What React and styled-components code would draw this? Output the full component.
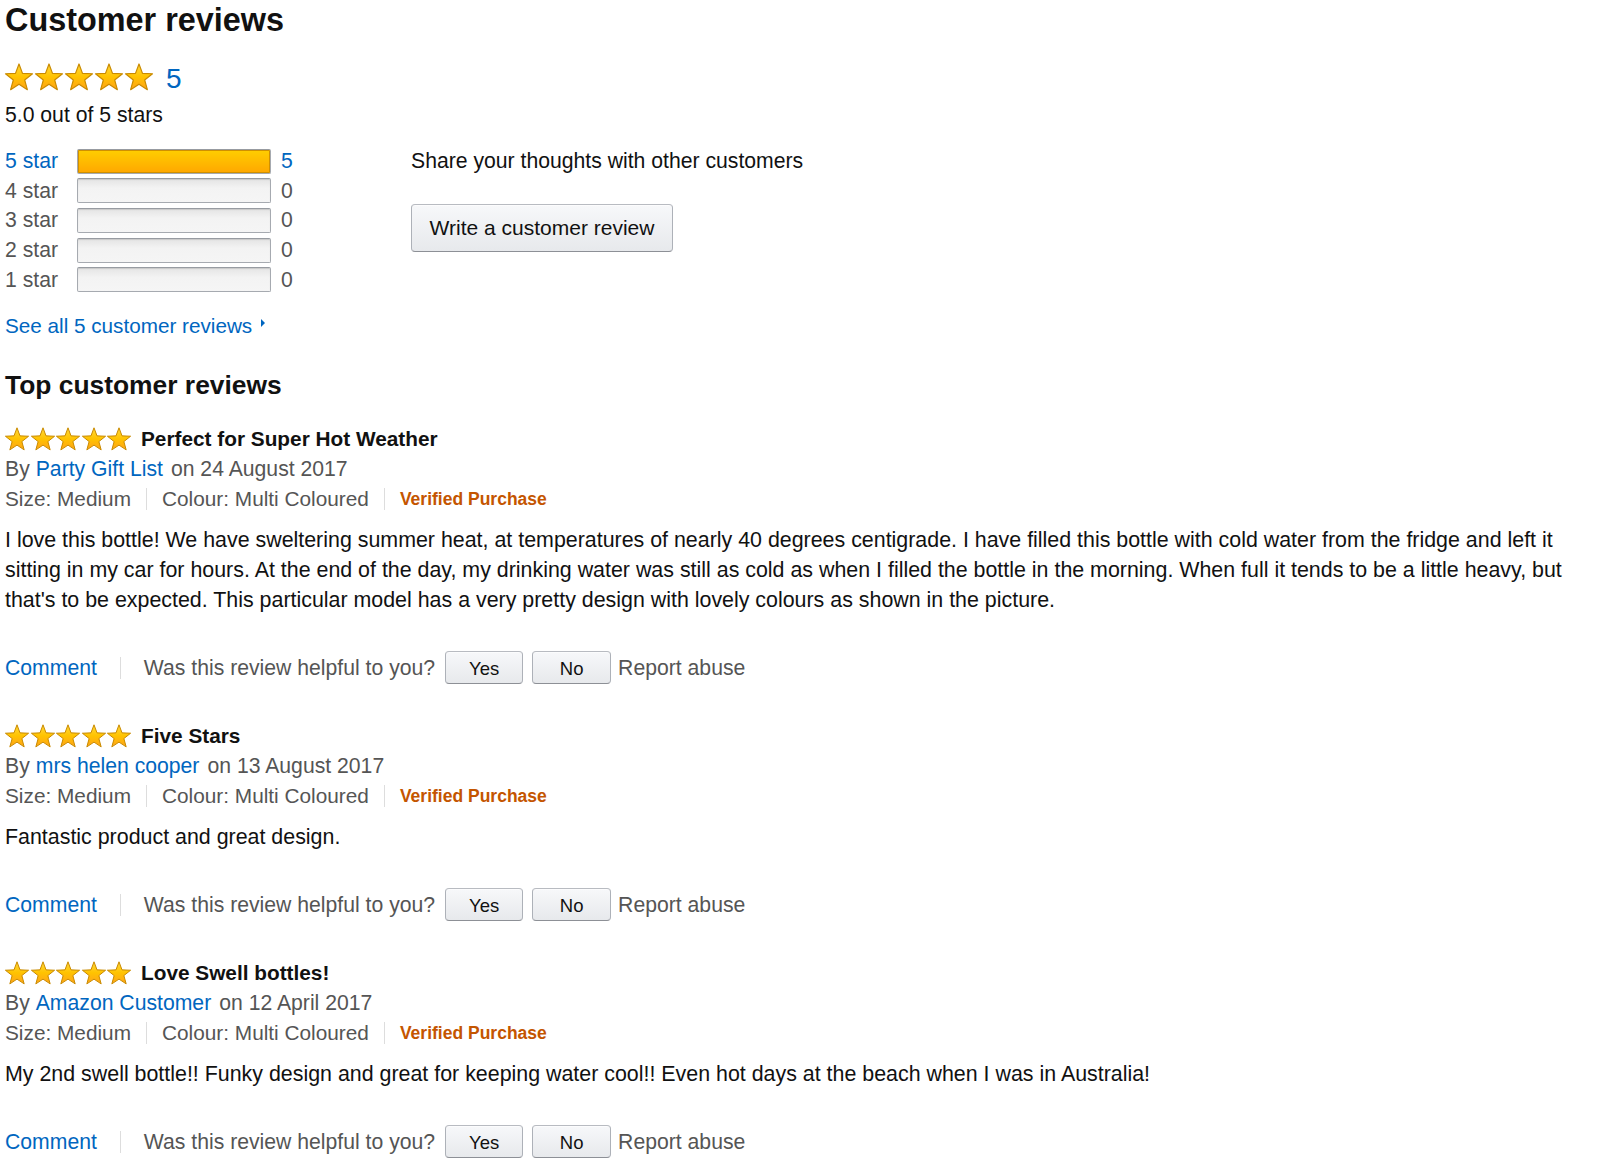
import { createGlobalStyle, styled } from "styled-components";

const GlobalStyle = createGlobalStyle`
  body {
    margin: 0;
    background: #fff;
    color: #111;
    font-family: "Liberation Sans", Arial, sans-serif;
  }
`;

const Page = styled.div`
  width: 1592px;
  padding-left: 5px;
  font-size: 21.2px;
  line-height: 30px;
`;

const Title = styled.h2`
  margin: 0;
  font-size: 32.4px;
  line-height: 41px;
  font-weight: bold;
`;

const SubTitle = styled.h3`
  margin: 27px 0 0;
  font-size: 26.4px;
  line-height: 34px;
  font-weight: bold;
`;

const Link = styled.a`
  color: #0066c0;
  text-decoration: none;
  cursor: pointer;
`;

const Summary = styled.div`
  display: flex;
  align-items: center;
  gap: 13px;
  margin-top: 21px;
  height: 30px;
`;

const BigCount = styled(Link)`
  font-size: 28px;
  line-height: 30px;
  margin-top: 4px;
`;

const OutOf = styled.div`
  margin-top: 8px;
`;

const StarsWrap = styled.span`
  display: inline-flex;
  flex-shrink: 0;
  gap: ${(p) => p.$gap}px;
  svg {
    overflow: visible;
  }
`;

const Columns = styled.div`
  display: flex;
  margin-top: 16px;
`;

const HistoColumn = styled.div`
  width: 406px;
`;

const HistoRow = styled.div`
  display: grid;
  grid-template-columns: 62px 194px auto;
  column-gap: 10px;
  align-items: center;
  height: 29.7px;
  color: ${(p) => (p.$active ? "#0066c0" : "#555")};
`;

const Meter = styled.div`
  height: 25px;
  box-sizing: border-box;
  border: 1px solid #a6aab0;
  border-top-color: #979ba1;
  border-radius: 2px;
  background: linear-gradient(to bottom, #e4e4e4, #f3f3f3 40%, #f5f5f5);
  box-shadow: inset 0 1px 1px rgba(0, 0, 0, 0.12);
  overflow: hidden;
`;

const MeterFill = styled.div`
  height: 100%;
  background: linear-gradient(to bottom, #ffce00, #ffa700);
  box-shadow: inset 0 0 0 1px #d09000;
`;

const SeeAll = styled(Link)`
  display: inline-flex;
  align-items: center;
  gap: 9px;
  margin-top: 17px;
  font-size: 20.7px;
`;

const Caret = styled.span`
  width: 0;
  height: 0;
  border-top: 4px solid transparent;
  border-bottom: 4px solid transparent;
  border-left: 4px solid #0066c0;
  margin-top: -6px;
`;

const ShareColumn = styled.div`
  display: flex;
  flex-direction: column;
  align-items: flex-start;
`;

const Button = styled.button`
  box-sizing: border-box;
  font-family: inherit;
  color: #111;
  background: linear-gradient(to bottom, #f7f8fa, #e7e9ec);
  border: 1px solid #adb1b8;
  border-top-color: #b8bbc1;
  border-bottom-color: #8d9096;
  border-radius: 4px;
  box-shadow: inset 0 1px 0 rgba(255, 255, 255, 0.6);
  cursor: pointer;
  padding: 0;
`;

const WriteButton = styled(Button)`
  margin-top: 28px;
  width: 262px;
  height: 48px;
  font-size: 21px;
`;

const Review = styled.div`
  margin-top: ${(p) => (p.$first ? "22px" : "36.5px")};
`;

const ReviewHead = styled.div`
  display: flex;
  align-items: center;
  gap: 10px;
  height: 30px;
`;

const ReviewTitle = styled.span`
  font-weight: bold;
  font-size: 20.8px;
`;

const ByLine = styled.div`
  color: #555;
  ${Link} {
    margin: 0 8px 0 6px;
  }
`;

const Meta = styled.div`
  display: flex;
  align-items: center;
  color: #555;
  font-size: 20.8px;
  height: 30px;
`;

const Sep = styled.span`
  width: 1px;
  height: 22px;
  background: #ddd;
  margin: 0 ${(p) => p.$gap || 15}px;
`;

const Verified = styled.span`
  color: #c45500;
  font-weight: bold;
  font-size: 17.5px;
`;

const Body = styled.p`
  margin: 10.5px 0 0;
  font-size: 21.4px;
  line-height: 30px;
`;

const Actions = styled.div`
  display: flex;
  align-items: center;
  margin-top: 36px;
  height: 34px;
  color: #555;
`;

const Vote = styled(Button)`
  width: ${(p) => p.$w}px;
  height: 33px;
  padding-top: 3px;
  font-size: 18.5px;
  margin-left: ${(p) => p.$ml}px;
`;

const Muted = styled.span`
  color: #555;
  margin-left: 7px;
`;

function Star({ size }) {
  return (
    <svg width={size} height={size} viewBox="0 0 24 24">
      <defs>
        <linearGradient id="starGrad" x1="0" y1="0" x2="0" y2="1">
          <stop offset="0" stopColor="#ffd83d" />
          <stop offset="0.5" stopColor="#ffc300" />
          <stop offset="1" stopColor="#ffa31a" />
        </linearGradient>
      </defs>
      <path
        d="M12 0.8L15.01 8.86L23.6 9.23L16.87 14.58L19.17 22.87L12 18.12L4.83 22.87L7.13 14.58L0.4 9.23L8.99 8.86Z"
        fill="url(#starGrad)"
        stroke="#c98a00"
        strokeWidth="1"
        strokeLinejoin="round"
      />
    </svg>
  );
}

function Stars({ size, pitch }) {
  return (
    <StarsWrap $gap={pitch - size}>
      {[0, 1, 2, 3, 4].map((i) => (
        <Star key={i} size={size} />
      ))}
    </StarsWrap>
  );
}

const histogram = [
  { label: "5 star", count: 5 },
  { label: "4 star", count: 0 },
  { label: "3 star", count: 0 },
  { label: "2 star", count: 0 },
  { label: "1 star", count: 0 },
];

const reviews = [
  {
    title: "Perfect for Super Hot Weather",
    author: "Party Gift List",
    date: "24 August 2017",
    body:
      "I love this bottle! We have sweltering summer heat, at temperatures of nearly 40 degrees centigrade. I have filled this bottle with cold water from the fridge and left it sitting in my car for hours. At the end of the day, my drinking water was still as cold as when I filled the bottle in the morning. When full it tends to be a little heavy, but that's to be expected. This particular model has a very pretty design with lovely colours as shown in the picture.",
  },
  {
    title: "Five Stars",
    author: "mrs helen cooper",
    date: "13 August 2017",
    body: "Fantastic product and great design.",
  },
  {
    title: "Love Swell bottles!",
    author: "Amazon Customer",
    date: "12 April 2017",
    body:
      "My 2nd swell bottle!! Funky design and great for keeping water cool!! Even hot days at the beach when I was in Australia!",
  },
];

function ReviewItem({ review, first }) {
  return (
    <Review $first={first}>
      <ReviewHead>
        <Stars size={24} pitch={25.5} />
        <ReviewTitle>{review.title}</ReviewTitle>
      </ReviewHead>
      <ByLine>
        By<Link>{review.author}</Link>on {review.date}
      </ByLine>
      <Meta>
        <span>Size: Medium</span>
        <Sep />
        <span>Colour: Multi Coloured</span>
        <Sep />
        <Verified>Verified Purchase</Verified>
      </Meta>
      <Body>{review.body}</Body>
      <Actions>
        <Link>Comment</Link>
        <Sep $gap={23} />
        <span>Was this review helpful to you?</span>
        <Vote $ml={10} $w={78}>Yes</Vote>
        <Vote $ml={9} $w={79}>No</Vote>
        <Muted>Report abuse</Muted>
      </Actions>
    </Review>
  );
}

export default function App() {
  const total = 5;
  return (
    <>
      <GlobalStyle />
      <Page>
        <Title>Customer reviews</Title>
        <Summary>
          <Stars size={28} pitch={30} />
          <BigCount>5</BigCount>
        </Summary>
        <OutOf>5.0 out of 5 stars</OutOf>
        <Columns>
          <HistoColumn>
            {histogram.map((row) => (
              <HistoRow key={row.label} $active={row.count > 0}>
                <span>{row.label}</span>
                <Meter>
                  <MeterFill style={{ width: `${(row.count / total) * 100}%` }} />
                </Meter>
                <span>{row.count}</span>
              </HistoRow>
            ))}
          </HistoColumn>
          <ShareColumn>
            <div>Share your thoughts with other customers</div>
            <WriteButton>Write a customer review</WriteButton>
          </ShareColumn>
        </Columns>
        <SeeAll>
          See all 5 customer reviews
          <Caret />
        </SeeAll>
        <SubTitle>Top customer reviews</SubTitle>
        {reviews.map((r, i) => (
          <ReviewItem key={r.title} review={r} first={i === 0} />
        ))}
      </Page>
    </>
  );
}
